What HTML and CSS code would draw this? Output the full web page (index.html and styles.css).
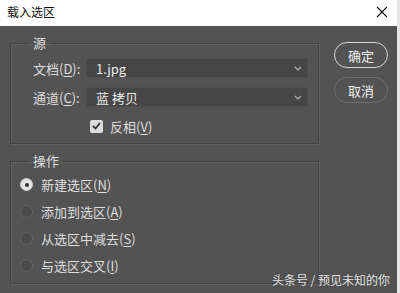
FILE: index.html
```html
<!DOCTYPE html>
<html lang="zh-CN">
<head>
    <meta charset="UTF-8">
    <title>载入选区</title>
    <link rel="stylesheet" href="styles.css">
</head>
<body>
    <div class="window">
        <div class="titlebar">
            <span class="title">载入选区</span>
            <svg class="close" width="12" height="12" viewBox="0 0 12 12">
                <path d="M1 1 L11 11 M11 1 L1 11" stroke="#111" stroke-width="1.1" fill="none"/>
            </svg>
        </div>
        <div class="dialog">
            <div class="groups">
                <fieldset class="group source">
                    <legend>源</legend>
                    <div class="field-row">
                        <label>文档(<u>D</u>):</label>
                        <div class="select">
                            <span>1.jpg</span>
                            <svg width="8" height="5" viewBox="0 0 8 5"><path d="M1 1 L4 4 L7 1" stroke="#bbb" stroke-width="1.1" fill="none"/></svg>
                        </div>
                    </div>
                    <div class="field-row">
                        <label>通道(<u>C</u>):</label>
                        <div class="select">
                            <span>蓝 拷贝</span>
                            <svg width="8" height="5" viewBox="0 0 8 5"><path d="M1 1 L4 4 L7 1" stroke="#bbb" stroke-width="1.1" fill="none"/></svg>
                        </div>
                    </div>
                    <div class="check-row">
                        <span class="checkbox">
                            <svg width="9" height="8" viewBox="0 0 9 8"><path d="M1 4 L3.5 6.5 L8 1" stroke="#333" stroke-width="1.8" fill="none"/></svg>
                        </span>
                        <span>反相(<u>V</u>)</span>
                    </div>
                </fieldset>
                <fieldset class="group operation">
                    <legend>操作</legend>
                    <div class="radio-row"><span class="radio checked"></span><span>新建选区(<u>N</u>)</span></div>
                    <div class="radio-row"><span class="radio"></span><span>添加到选区(<u>A</u>)</span></div>
                    <div class="radio-row"><span class="radio"></span><span>从选区中减去(<u>S</u>)</span></div>
                    <div class="radio-row"><span class="radio"></span><span>与选区交叉(<u>I</u>)</span></div>
                </fieldset>
            </div>
            <div class="actions">
                <button class="btn ok">确定</button>
                <button class="btn cancel">取消</button>
            </div>
        </div>
        <div class="watermark">头条号 / 预见未知的你</div>
    </div>
</body>
</html>
```

FILE: styles.css
```css
html, body {
    margin: 0;
    padding: 0;
    background-color: #535353;
}

body {
    font-family: "Noto Sans CJK SC", "Noto Sans", sans-serif;
    font-size: 13px;
    color: #dedede;
}

.window {
    position: relative;
    width: 397px;
    height: 293px;
    border-right: 3px solid #e6e6e6;
    overflow: hidden;
}

.titlebar {
    height: 26px;
    background-color: #fff;
    display: flex;
    align-items: center;
    justify-content: space-between;
    padding: 0 9px 0 7px;
    box-sizing: border-box;
}

.title {
    color: #111;
    font-size: 12px;
    line-height: 14px;
    margin-top: -2px;
}

.close {
    margin-top: -2px;
}

.dialog {
    display: flex;
    padding-left: 10px;
}

.groups {
    width: 309px;
}

.group {
    margin: 0;
    padding: 0 0 0 22px;
    border: 1px solid #444;
    box-shadow: 1px 1px 0 #5f5f5f inset, 1px 1px 0 #5f5f5f;
    min-width: 0;
}

.group legend {
    padding: 0 4px;
    margin-left: -4px;
    line-height: 14px;
    font-size: 13px;
}

.source {
    margin-top: 10px;
    padding-top: 8px;
    padding-bottom: 10px;
}

.field-row {
    display: flex;
    align-items: center;
    height: 20px;
    margin-bottom: 9px;
}

.field-row label {
    width: 53px;
}

.select {
    flex: 1;
    height: 20px;
    margin-right: 10px;
    box-sizing: border-box;
    background-color: #464646;
    border: 1px solid #4f4f4f;
    display: flex;
    align-items: center;
    justify-content: space-between;
    padding: 0 5px 0 9px;
    color: #ececec;
}

.select svg {
    margin-top: 1px;
}

.check-row {
    display: flex;
    align-items: center;
    height: 14px;
    margin-left: 57px;
    margin-top: 12px;
    gap: 7px;
}

.checkbox {
    width: 13px;
    height: 13px;
    background-color: #dcdcdc;
    border-radius: 2px;
    display: flex;
    align-items: center;
    justify-content: center;
}

.operation {
    margin-top: 10px;
    padding: 3px 0 4px 9px;
}

.operation legend {
    margin-left: 9px;
}

.radio-row {
    display: flex;
    align-items: center;
    height: 27px;
    gap: 8px;
}

.radio {
    width: 13px;
    height: 13px;
    border-radius: 50%;
    box-sizing: border-box;
    background-color: #4b4b4b;
    border: 1px solid #666;
}

.radio.checked {
    background-color: #e4e4e4;
    border-color: #cfcfcf;
    display: flex;
    align-items: center;
    justify-content: center;
}

.radio.checked::after {
    content: "";
    width: 4px;
    height: 4px;
    border-radius: 50%;
    background-color: #333;
}

u {
    text-decoration-thickness: 1px;
    text-underline-offset: 2px;
}

.actions {
    display: flex;
    flex-direction: column;
    gap: 9px;
    margin-left: 15px;
    padding-top: 16px;
}

.btn {
    width: 54px;
    height: 26px;
    border-radius: 13px;
    background-color: #535353;
    color: #f0f0f0;
    font-family: inherit;
    font-size: 13px;
    padding: 0;
    cursor: pointer;
}

.ok {
    border: 1.5px solid #d6d6d6;
}

.cancel {
    border: 1.5px solid #6e6e6e;
}

.watermark {
    position: absolute;
    right: 7px;
    bottom: 5px;
    font-size: 12px;
    color: #e4e4e4;
    text-shadow: 0 0 2px #444;
}
```
